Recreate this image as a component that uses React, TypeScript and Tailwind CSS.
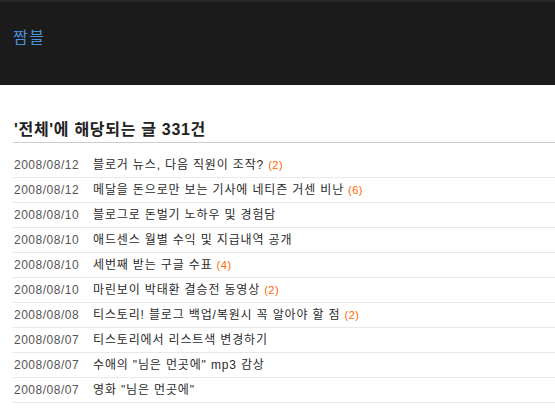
const posts = [
  { date: "2008/08/12", title: "블로거 뉴스, 다음 직원이 조작?", count: 2 },
  { date: "2008/08/12", title: "메달을 돈으로만 보는 기사에 네티즌 거센 비난", count: 6 },
  { date: "2008/08/10", title: "블로그로 돈벌기 노하우 및 경험담" },
  { date: "2008/08/10", title: "애드센스 월별 수익 및 지급내역 공개" },
  { date: "2008/08/10", title: "세번째 받는 구글 수표", count: 4 },
  { date: "2008/08/10", title: "마린보이 박태환 결승전 동영상", count: 2 },
  { date: "2008/08/08", title: "티스토리! 블로그 백업/복원시 꼭 알아야 할 점", count: 2 },
  { date: "2008/08/07", title: "티스토리에서 리스트색 변경하기" },
  { date: "2008/08/07", title: "수애의 \"님은 먼곳에\" mp3 감상" },
  { date: "2008/08/07", title: "영화 \"님은 먼곳에\"" },
];

export default function App() {
  return (
    <div className="w-[555px] h-[412px] overflow-hidden bg-white font-['Liberation_Sans','Noto_Sans_CJK_KR',sans-serif]">
      {/* Header */}
      <header className="h-[85px] bg-[#1b1b1b] border-t-2 border-[#282828] px-[13px] pt-[24px]">
        <a className="text-[16px] leading-[20px] text-[#4a90d8] tracking-[1.5px]">짬블</a>
      </header>

      {/* Content */}
      <div className="ml-[13px] pt-[35px]">
        <h2 className="pl-[1px] pb-[2px] text-[16px] leading-[20px] font-bold text-[#222] tracking-[0.7px] border-b border-[#cccccc]">
          '전체'에 해당되는 글 331건
        </h2>

        <ul className="mt-[10px]">
          {posts.map((p, i) => (
            <li key={i} className="h-[25px] flex items-center border-b border-[#e8e8e8] text-[12px]">
              <span className="w-[80px] pl-[1px] text-[#555] tracking-[0.5px]">{p.date}</span>
              <span className="text-[#2b2b2b] tracking-[0.85px]">{p.title}</span>
              {p.count && <span className="ml-[4px] text-[11px] text-[#ff6600] tracking-[0.5px]">({p.count})</span>}
            </li>
          ))}
        </ul>
      </div>
    </div>
  );
}
